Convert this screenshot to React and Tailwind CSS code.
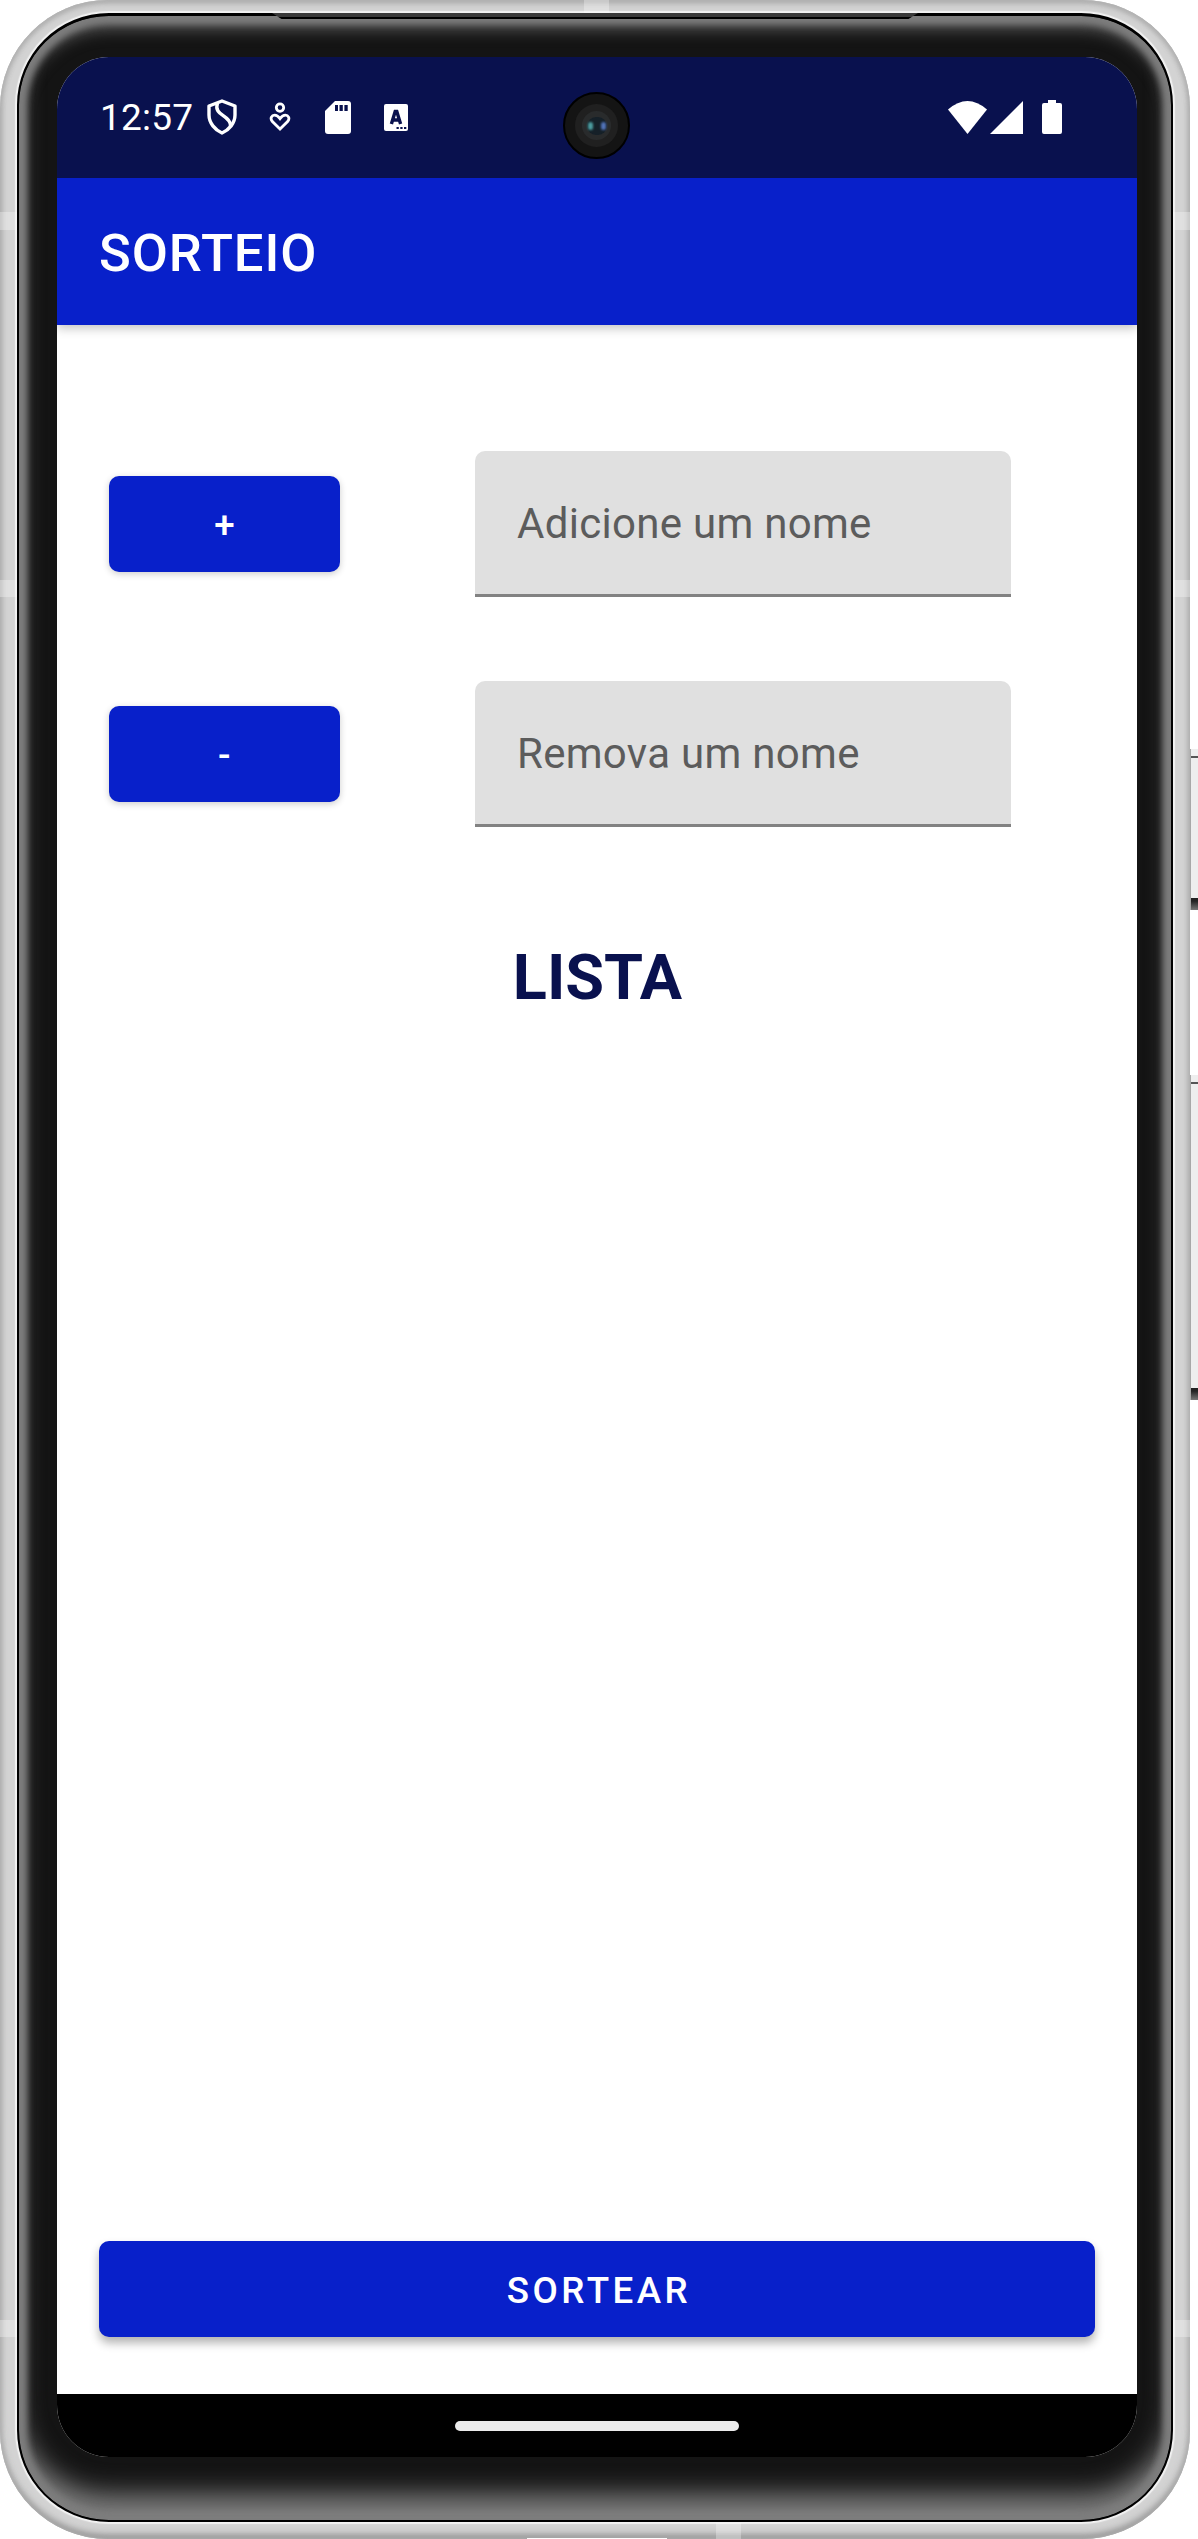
function Shield() {
  return (
    <svg className="h-[36px] w-[30px]" viewBox="0 0 30 36" fill="none" stroke="white" strokeWidth="3.4" strokeLinejoin="round">
      <path d="M15 2 L28 7 V16 C28 24 22 31 15 34 C8 31 2 24 2 16 V7 Z" />
      <path d="M10.500 4 C6 17 24 16 23.500 27" />
    </svg>
  );
}

function PersonHeart() {
  return (
    <svg className="h-[30px] w-[22px]" viewBox="0 0 22 30" fill="none" stroke="white" strokeWidth="2.8">
      <circle cx="11" cy="5.6" r="3.7" />
      <path d="M11 27 L3.4 19.6 C0.5 16 3 13.2 5.6 13.2 C8 13.2 9.5 14.6 11 16.6 C12.500 14.6 14 13.2 16.400 13.2 C19 13.2 21.500 16 18.600 19.600 Z" />
    </svg>
  );
}

function SdCard() {
  return (
    <svg className="h-[33px] w-[26px]" viewBox="0 0 26 33">
      <path fill="white" d="M10 0 H23 Q26 0 26 3 V30 Q26 33 23 33 H3 Q0 33 0 30 V10 Z" />
      <path fill="#09114e" d="M10 4h3v6h-3z M14.500 4h3.300v6h-3.300z M19.400 4h3.300v6h-3.300z" />
    </svg>
  );
}

function LetterBox() {
  return (
    <svg className="h-[27px] w-[24px]" viewBox="0 0 24 27">
      <rect width="24" height="27" rx="2" fill="white" />
      <path fill="none" stroke="#09114e" strokeWidth="3.4" d="M7.400 20 L11.200 7.500 H12.800 L16.600 20 M9 16 H15" />
      <path fill="#09114e" d="M12.500 23h2.300v2h-2.300z M16.300 23h2.300v2h-2.300z M20 23h2.300v2h-2.300z" />
    </svg>
  );
}

function Camera() {
  return (
    <div className="absolute left-[506px] top-[35px] flex size-[67px] items-center justify-center rounded-full border-2 border-black bg-[#141414]">
      <div className="flex size-[43px] items-center justify-center rounded-full bg-[#202020]">
        <div className="flex size-[29px] items-center justify-center rounded-full bg-[#292b2c]">
          <div className="flex h-[18px] w-[20px] items-center justify-between rounded-full bg-[#152028] px-px">
            <span className="h-[8px] w-[5px] rounded-full bg-[#4c9da0] blur-[1px]" />
            <span className="h-[8px] w-[5px] rounded-full bg-[#5273b8] blur-[1px]" />
          </div>
        </div>
      </div>
    </div>
  );
}

function StatusBar() {
  return (
    <div className="relative h-[121px] bg-[#09114e]">
      <div className="flex h-[121px] items-start pl-[43px] pr-[75px] pt-[41px]">
        <span className="w-[107px] whitespace-nowrap pt-px text-[37px] leading-[38px] tracking-[0.2px] text-white">12:57</span>
        <div className="flex h-[38px] flex-1 items-center">
          <Shield />
          <span className="ml-[32px]"><PersonHeart /></span>
          <span className="ml-[34px]"><SdCard /></span>
          <span className="ml-[33px]"><LetterBox /></span>
        </div>
        <div className="flex h-[38px] items-center">
          <svg className="h-[33px] w-[39px]" viewBox="0 0 39 33">
            <path fill="white" d="M0 8.500 Q19.500 -8.500 39 8.500 L19.500 33 Z" />
          </svg>
          <svg className="ml-[3px] h-[33px] w-[33px]" viewBox="0 0 33 33">
            <path fill="white" d="M33 0 V33 H0 Z" />
          </svg>
          <svg className="ml-[19px] h-[34px] w-[20px]" viewBox="0 0 20 34">
            <path fill="white" d="M6 0 H14 V3 H18 Q20 3 20 5 V32 Q20 34 18 34 H2 Q0 34 0 32 V5 Q0 3 2 3 H6 Z" />
          </svg>
        </div>
      </div>
      <Camera />
    </div>
  );
}

function NameRow({ action, hint }) {
  return (
    <div className="flex h-[146px] items-center">
      <button className="h-[96px] w-[231px] rounded-[10px] bg-[#0820ca] pl-[3px] pt-[3px] text-center text-[36.750px] font-medium tracking-[0.089em] text-white shadow-[0_2px_7px_rgba(0,0,0,0.2)]">
        {action}
      </button>
      <div className="ml-[135px] flex h-[146px] w-[536px] items-center rounded-t-[10px] border-b-[3px] border-[#828282] bg-[#e0e0e0] pl-[42px] pt-[2px] text-[42px] tracking-[0.007em] text-[#5c5c5c]">
        {hint}
      </div>
    </div>
  );
}

function Screen() {
  return (
    <div className="ml-[38px] mt-[41px] flex h-[2400px] w-[1080px] flex-col overflow-hidden rounded-[52px] bg-white">
      <StatusBar />
      <header className="flex h-[147px] shrink-0 items-center bg-[#0820ca] pl-[42px] pt-[3px] text-[52.500px] font-medium tracking-[0.9px] text-white shadow-[0_3px_10px_rgba(0,0,0,0.25)]">
        SORTEIO
      </header>
      <main className="flex flex-1 flex-col">
        <div className="flex flex-col gap-[84px] pl-[52px] pt-[126px]">
          <NameRow action="+" hint="Adicione um nome" />
          <NameRow action="-" hint="Remova um nome" />
        </div>
        <h1 className="mt-[109px] pl-px text-center text-[63px] font-bold leading-[84px] text-[#09114e]">LISTA</h1>
        <button className="mx-[42px] mb-[57px] mt-auto h-[96px] rounded-[10px] bg-[#0820ca] pl-[4px] pt-[3px] text-center text-[36.750px] font-medium tracking-[0.094em] text-white shadow-[0_6px_10px_rgba(0,0,0,0.3)]">
          SORTEAR
        </button>
      </main>
      <footer className="flex h-[63px] shrink-0 justify-center bg-black pt-[27px]">
        <span className="h-[10px] w-[284px] rounded-full bg-[#ebebeb]" />
      </footer>
    </div>
  );
}

function Band({ className }) {
  return <span className={"absolute bg-white/30 " + className} />;
}

function SideKey({ className }) {
  return (
    <div className={"absolute left-[1190px] w-[8px] border-l border-[#a8a8a8] bg-[#eeeeee] " + className}>
      <span className="absolute inset-x-0 top-[7px] h-[2px] bg-[#555]" />
      <span className="absolute inset-x-0 bottom-0 h-[12px] bg-[linear-gradient(#222_25%,#777)]" />
    </div>
  );
}

export default function App() {
  return (
    <div className="relative h-[2539px] w-[1198px] overflow-hidden bg-white font-['Roboto',sans-serif]">
      <div className="relative h-[2539px] w-[1190px] rounded-[108px] bg-[#d3d3d3] pl-[17px] pt-[13px] shadow-[inset_0_0_4px_1px_#b8b8b8,inset_0_-5px_8px_-2px_#777,inset_0_4px_7px_-2px_#999]">
        <Band className="left-0 top-[212px] h-[18px] w-[17px]" />
        <Band className="left-0 top-[580px] h-[17px] w-[17px]" />
        <Band className="left-0 top-[2320px] h-[17px] w-[17px]" />
        <Band className="right-0 top-[212px] h-[18px] w-[17px]" />
        <Band className="right-0 top-[580px] h-[17px] w-[17px]" />
        <Band className="right-0 top-[2320px] h-[17px] w-[17px]" />
        <Band className="left-[584px] top-0 h-[15px] w-[25px]" />
        <Band className="bottom-0 left-[716px] h-[16px] w-[25px]" />
        <div className="h-[2509px] w-[1156px] rounded-[92px] border-2 border-t-[3px] border-black bg-[#141414] shadow-[0_0_1px_2px_#f2f2f2,inset_0_0_6px_8px_#7d7d7d,inset_0_14px_16px_-1px_#5c5c5c,inset_0_-28px_26px_-2px_#7d7d7d]">
          <Screen />
        </div>
      </div>
      <SideKey className="top-[749px] h-[161px]" />
      <SideKey className="top-[1075px] h-[325px]" />
      <span className="absolute bottom-0 left-[527px] h-px w-[140px] bg-white" />
      <span className="absolute left-[272px] top-[13px] h-[6px] w-[646px] border-b-2 border-black bg-[#3a3a3a] [clip-path:polygon(0_0,100%_0,98.5%_100%,1.5%_100%)]" />
    </div>
  );
}
